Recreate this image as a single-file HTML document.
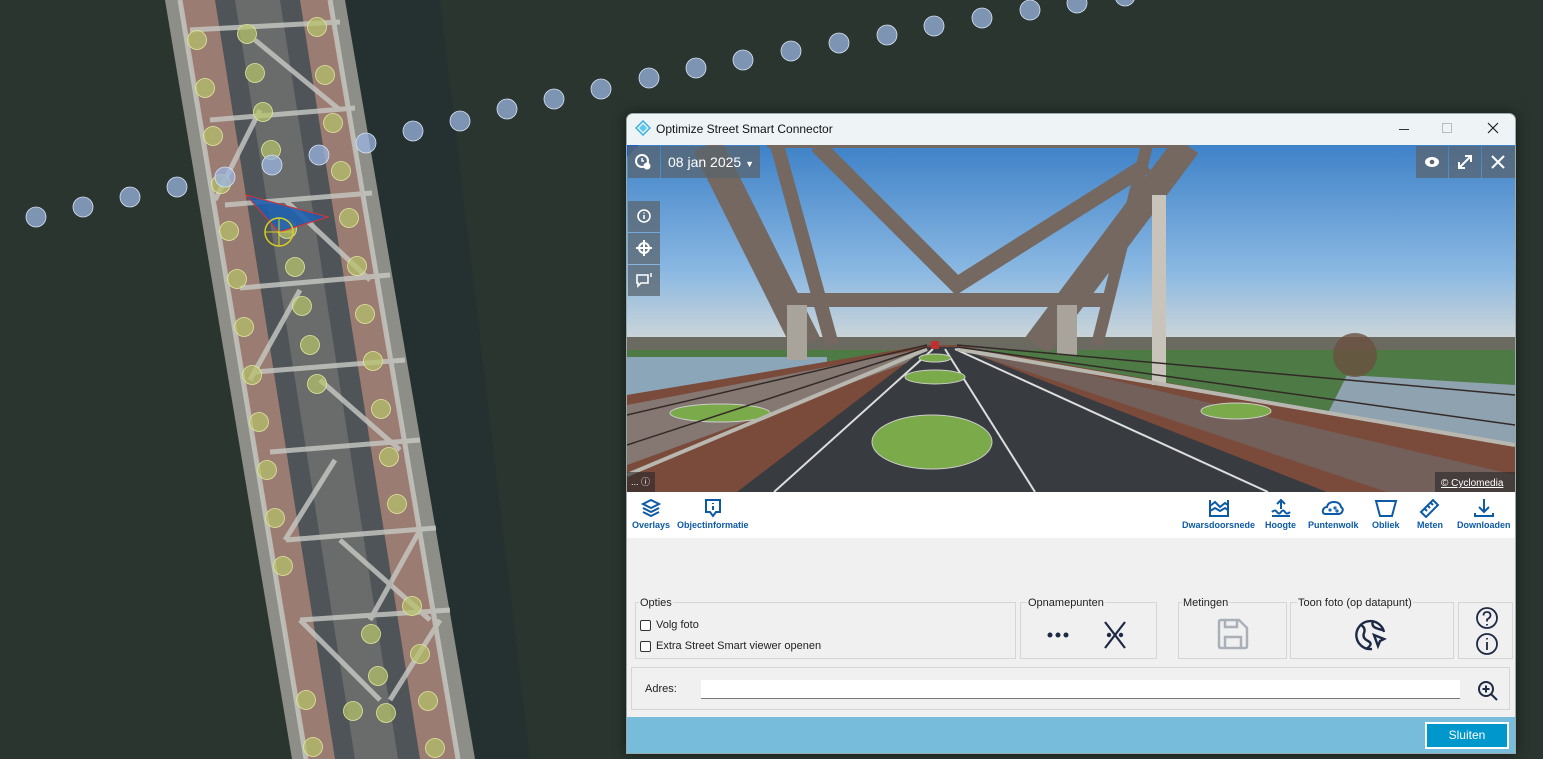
<!DOCTYPE html>
<html><head><meta charset="utf-8"><style>
*{margin:0;padding:0;box-sizing:border-box}
body{width:1543px;height:759px;overflow:hidden;background:#2a352f;font-family:"Liberation Sans",sans-serif;position:relative}
#map{position:absolute;left:0;top:0}
#dlg{position:absolute;left:626px;top:113px;width:890px;height:641px;background:#f0f0f0;border:1px solid #9aa;border-radius:7px 7px 0 0;overflow:hidden;box-shadow:0 0 12px rgba(0,0,0,.5)}
.title{position:absolute;left:0;top:0;width:100%;height:31px;background:#eef4f6;font-size:12px;color:#111}
.pano{position:absolute;left:0;top:31px;width:888px;height:347px}
.tb{position:absolute;left:0;top:378px;width:888px;height:46px;background:#fff}
.tool{position:absolute;top:6px;text-align:center;color:#0d5aa7;font-size:9px;font-weight:bold}
.tool svg{display:block;margin:0 auto 2px}
.grp{position:absolute;border:1px solid #d6d6d6;height:57px}
.lg{position:absolute;top:-6px;left:3px;background:#f0f0f0;font-size:11px;color:#222;padding:0 1px}
.cb{position:absolute;font-size:11px;color:#222;display:flex;align-items:center}
.cb i{display:inline-block;width:11px;height:11px;border:1px solid #333;border-radius:2px;background:#fff;margin-right:5px}
.ov{position:absolute;background:rgba(90,100,110,.75)}
</style></head><body>
<svg id="map" width="626" height="759" viewBox="0 0 626 759">
<rect width="626" height="759" fill="#2a352f"/>
<polygon points="345,0 440,0 530,759 470,759" fill="#243130"/>
<polygon points="165,0 345,0 475,759 292,759" fill="#8e8e88"/>
<polygon points="180,0 330,0 458,759 306,759" fill="#9a7c72"/>
<polygon points="215,0 300,0 420,759 335,759" fill="#4e5457"/>
<polygon points="235,0 280,0 398,759 355,759" fill="#6a6c6b"/>
<g stroke="#c8cac4" stroke-width="5" opacity=".8">
<line x1="180" y1="0" x2="306" y2="759"/><line x1="330" y1="0" x2="458" y2="759"/>
<line x1="190" y1="30" x2="340" y2="22"/><line x1="210" y1="120" x2="355" y2="108"/>
<line x1="225" y1="205" x2="372" y2="193"/><line x1="240" y1="288" x2="390" y2="275"/>
<line x1="255" y1="372" x2="405" y2="360"/><line x1="270" y1="452" x2="420" y2="440"/>
<line x1="286" y1="540" x2="436" y2="528"/><line x1="300" y1="620" x2="450" y2="610"/>
<line x1="255" y1="40" x2="340" y2="110"/><line x1="260" y1="110" x2="215" y2="200"/>
<line x1="285" y1="200" x2="370" y2="280"/><line x1="300" y1="290" x2="250" y2="380"/>
<line x1="320" y1="380" x2="400" y2="450"/><line x1="335" y1="460" x2="285" y2="540"/>
<line x1="340" y1="540" x2="430" y2="620"/><line x1="420" y1="530" x2="370" y2="620"/>
<line x1="300" y1="620" x2="380" y2="700"/><line x1="440" y1="620" x2="390" y2="700"/>
</g>
<g fill="#b7c36a" fill-opacity=".7" stroke="#e0e6a0" stroke-width=".8">
<circle cx="197" cy="40" r="9.5"/><circle cx="205" cy="88" r="9.5"/><circle cx="213" cy="136" r="9.5"/><circle cx="221" cy="184" r="9.5"/><circle cx="229" cy="231" r="9.5"/><circle cx="237" cy="279" r="9.5"/><circle cx="244" cy="327" r="9.5"/><circle cx="252" cy="375" r="9.5"/><circle cx="259" cy="422" r="9.5"/><circle cx="267" cy="470" r="9.5"/><circle cx="275" cy="518" r="9.5"/><circle cx="283" cy="566" r="9.5"/>
<circle cx="247" cy="34" r="9.5"/><circle cx="255" cy="73" r="9.5"/><circle cx="263" cy="112" r="9.5"/><circle cx="271" cy="150" r="9.5"/><circle cx="287" cy="229" r="9.5"/><circle cx="295" cy="267" r="9.5"/><circle cx="302" cy="306" r="9.5"/><circle cx="310" cy="345" r="9.5"/><circle cx="317" cy="384" r="9.5"/>
<circle cx="317" cy="27" r="9.5"/><circle cx="325" cy="75" r="9.5"/><circle cx="333" cy="123" r="9.5"/><circle cx="341" cy="171" r="9.5"/><circle cx="349" cy="218" r="9.5"/><circle cx="357" cy="266" r="9.5"/><circle cx="365" cy="314" r="9.5"/><circle cx="373" cy="361" r="9.5"/><circle cx="381" cy="409" r="9.5"/><circle cx="389" cy="457" r="9.5"/><circle cx="397" cy="504" r="9.5"/><circle cx="371" cy="634" r="9.5"/><circle cx="412" cy="606" r="9.5"/><circle cx="420" cy="654" r="9.5"/><circle cx="428" cy="701" r="9.5"/><circle cx="435" cy="748" r="9.5"/><circle cx="378" cy="676" r="9.5"/><circle cx="386" cy="713" r="9.5"/><circle cx="306" cy="700" r="9.5"/><circle cx="313" cy="747" r="9.5"/><circle cx="353" cy="711" r="9.5"/>
</g>
<g fill="#9bb4e0" fill-opacity=".75" stroke="#d6e2f4" stroke-width=".8">
<circle cx="36" cy="217" r="10"/><circle cx="83" cy="207" r="10"/><circle cx="130" cy="197" r="10"/><circle cx="177" cy="187" r="10"/><circle cx="225" cy="177" r="10"/><circle cx="272" cy="165" r="10"/><circle cx="319" cy="155" r="10"/><circle cx="366" cy="143" r="10"/><circle cx="413" cy="131" r="10"/><circle cx="460" cy="121" r="10"/><circle cx="507" cy="109" r="10"/><circle cx="554" cy="99" r="10"/><circle cx="601" cy="89" r="10"/>
</g>
<polygon points="246,195 328,217 279,232" fill="#1f5fae" fill-opacity=".9" stroke="#e03030" stroke-width="1"/>
<circle cx="279" cy="232" r="14" fill="none" stroke="#d8d020" stroke-width="1.5"/>
<line x1="265" y1="232" x2="293" y2="232" stroke="#d8d020"/><line x1="279" y1="218" x2="279" y2="246" stroke="#d8d020"/>
</svg>
<svg style="position:absolute;left:626px;top:0" width="917" height="113" viewBox="626 0 917 113">
<rect x="626" y="0" width="917" height="113" fill="#2a352f"/>
<g fill="#9bb4e0" fill-opacity=".75" stroke="#d6e2f4" stroke-width=".8">
<circle cx="649" cy="78" r="10"/><circle cx="696" cy="68" r="10"/><circle cx="743" cy="60" r="10"/><circle cx="791" cy="51" r="10"/><circle cx="839" cy="43" r="10"/><circle cx="887" cy="35" r="10"/><circle cx="934" cy="26" r="10"/><circle cx="982" cy="18" r="10"/><circle cx="1030" cy="10" r="10"/><circle cx="1077" cy="3" r="10"/><circle cx="1125" cy="-4" r="10"/>
</g></svg>
<svg style="position:absolute;left:1516px;top:113px" width="27" height="646"><rect width="27" height="646" fill="#2a352f"/></svg>

<div id="dlg">
<div class="title">
<svg style="position:absolute;left:8px;top:6px" width="16" height="16" viewBox="0 0 16 16"><polygon points="8,1 15,8 8,15 1,8" fill="none" stroke="#3ab0e0" stroke-width="1.5"/><polygon points="8,4 12,8 8,12 4,8" fill="#5ec8ee"/></svg>
<span style="position:absolute;left:29px;top:8px">Optimize Street Smart Connector</span>
<div style="position:absolute;left:772px;top:15px;width:10px;height:1px;background:#333"></div>
<div style="position:absolute;left:815px;top:9px;width:10px;height:10px;border:1px solid #bbb"></div>
<svg style="position:absolute;left:860px;top:8px" width="12" height="12"><path d="M1 1L11 11M11 1L1 11" stroke="#222" stroke-width="1.2"/></svg>
</div>
<svg class="pano" viewBox="0 0 888 347">
<defs><linearGradient id="sky" x1="0" y1="0" x2="0" y2="1"><stop offset="0" stop-color="#3f82c8"/><stop offset=".6" stop-color="#8ab8e2"/><stop offset="1" stop-color="#dcdcd6"/></linearGradient></defs>
<rect width="888" height="210" fill="url(#sky)"/>
<rect y="192" width="888" height="16" fill="#6a6a60"/>
<rect x="0" y="205" width="888" height="142" fill="#4d7a45"/>
<rect x="0" y="212" width="200" height="40" fill="#8aa6b8"/>
<polygon points="720,230 888,240 888,300 700,270" fill="#8fa2b0"/>
<polygon points="0,250 300,200 330,200 888,300 888,347 0,347" fill="#7a4a3a"/>
<polygon points="0,260 300,203 320,203 0,320" fill="#8a8c8c" opacity=".7"/>
<polygon points="330,203 350,203 888,330 888,347 760,347" fill="#6f7070" opacity=".6"/>
<polygon points="300,202 330,202 700,347 110,347" fill="#383b40"/>
<line x1="306" y1="204" x2="147" y2="347" stroke="#ddd" stroke-width="2"/>
<line x1="318" y1="204" x2="408" y2="347" stroke="#ddd" stroke-width="2"/>
<line x1="328" y1="204" x2="641" y2="347" stroke="#ddd" stroke-width="2"/>
<g fill="#7aaa4a" stroke="#ccc" stroke-width="1"><ellipse cx="305" cy="297" rx="60" ry="27"/><ellipse cx="308" cy="232" rx="30" ry="7"/><ellipse cx="308" cy="213" rx="16" ry="4"/><ellipse cx="609" cy="266" rx="35" ry="8"/><ellipse cx="93" cy="268" rx="50" ry="9"/></g>
<rect x="304" y="196" width="8" height="8" fill="#c03030"/>
<g stroke="#746860" fill="none" stroke-linecap="butt">
<path d="M80 0 L180 200" stroke-width="30"/>
<path d="M150 0 L205 200" stroke-width="14"/>
<path d="M560 0 L410 200" stroke-width="28"/>
<path d="M520 0 L470 200" stroke-width="12"/>
<path d="M190 0 L330 140 L520 20" stroke-width="16"/>
<path d="M170 155 L480 155" stroke-width="14"/>
<path d="M140 0 L560 0" stroke-width="6"/>
</g>
<rect x="160" y="160" width="20" height="55" fill="#a8a49c"/>
<rect x="430" y="160" width="20" height="50" fill="#a8a49c"/>
<rect x="525" y="50" width="14" height="190" fill="#c8c4bc"/>
<g stroke="#b8b8b0" stroke-width="4" fill="none"><path d="M0 330 L300 204"/><path d="M888 300 L330 204"/></g>
<g stroke="#332a28" stroke-width="1.5" fill="none"><path d="M0 270 L300 200"/><path d="M0 300 L300 202"/><path d="M888 250 L330 200"/><path d="M888 280 L330 202"/></g>
<circle cx="728" cy="210" r="22" fill="#6a5040" opacity=".8"/>
<rect x="808" y="327" width="80" height="20" fill="rgba(40,40,40,.6)"/>
<text x="814" y="341" font-size="10" fill="#fff" text-decoration="underline" font-family="Liberation Sans">© Cyclomedia</text>
<rect x="0" y="327" width="28" height="20" fill="rgba(40,40,40,.6)"/>
<text x="4" y="340" font-size="9" fill="#fff" font-family="Liberation Sans">... ⓘ</text>
</svg>
<div style="position:absolute;left:0;top:31px;width:0;height:0;border-top:12px solid #1a60c8;border-right:12px solid transparent"></div>
<div class="ov" style="left:1px;top:32px;width:32px;height:32px"><svg width="32" height="32"><circle cx="14" cy="15" r="6" fill="none" stroke="#fff" stroke-width="2"/><circle cx="19" cy="20" r="3.5" fill="#fff"/><path d="M14 12v3h2" stroke="#fff" fill="none" stroke-width="1.5"/></svg></div>
<div class="ov" style="left:34px;top:32px;width:99px;height:32px;color:#fff;font-size:14px;line-height:32px;padding-left:7px">08 jan 2025 <span style="font-size:9px">▼</span></div>
<div class="ov" style="left:1px;top:87px;width:32px;height:31px"><svg width="32" height="31"><circle cx="16" cy="15" r="6" fill="none" stroke="#fff" stroke-width="1.6"/><path d="M16 14v4M16 11.5v1" stroke="#fff" stroke-width="1.6"/></svg></div>
<div class="ov" style="left:1px;top:119px;width:32px;height:31px"><svg width="32" height="31"><circle cx="16" cy="15" r="5" fill="none" stroke="#fff" stroke-width="2"/><path d="M16 7v16M8 15h16" stroke="#fff" stroke-width="2"/></svg></div>
<div class="ov" style="left:1px;top:151px;width:32px;height:31px"><svg width="32" height="31"><path d="M9 10h11v8h-7l-3 3v-3h-1z" fill="none" stroke="#fff" stroke-width="1.6"/><path d="M23 8v4" stroke="#fff" stroke-width="1.5"/></svg></div>
<div class="ov" style="left:789px;top:32px;width:32px;height:32px"><svg width="32" height="32"><ellipse cx="16" cy="16" rx="7" ry="5" fill="#fff"/><circle cx="16" cy="16" r="2.3" fill="#5a646e"/></svg></div>
<div class="ov" style="left:822px;top:32px;width:32px;height:32px"><svg width="32" height="32"><path d="M10 22L22 10M16 10h6v6M10 16v6h6" stroke="#fff" stroke-width="2" fill="none"/></svg></div>
<div class="ov" style="left:855px;top:32px;width:33px;height:32px"><svg width="32" height="32"><path d="M10 10L22 22M22 10L10 22" stroke="#fff" stroke-width="2"/></svg></div>

<div class="tb">
<div class="tool" style="left:5px"><svg width="22" height="20" viewBox="0 0 22 20" fill="none" stroke="#0d5aa7" stroke-width="2"><path d="M11 2l8 4-8 4-8-4z"/><path d="M3 10l8 4 8-4M3 14l8 4 8-4"/></svg>Overlays</div>
<div class="tool" style="left:50px"><svg width="20" height="20" viewBox="0 0 20 20" fill="none" stroke="#0d5aa7" stroke-width="2"><path d="M3 2h14v12h-4l-3 4-3-4H3z"/><path d="M10 8v4M10 5v1"/></svg>Objectinformatie</div>
<div class="tool" style="left:555px"><svg width="24" height="20" viewBox="0 0 24 20" fill="none" stroke="#0d5aa7" stroke-width="2"><path d="M3 2v16h18V2M3 8l5-4 5 5 5-4 3 2M3 13l5-3 5 3 5-3 3 2"/></svg>Dwarsdoorsnede</div>
<div class="tool" style="left:638px"><svg width="22" height="20" viewBox="0 0 22 20" fill="none" stroke="#0d5aa7" stroke-width="2"><path d="M11 11V2M7 6l4-4 4 4M2 14q3-3 5 0t4 0 4 0 5 0M2 18h18"/></svg>Hoogte</div>
<div class="tool" style="left:681px"><svg width="24" height="20" viewBox="0 0 24 20" fill="none" stroke="#0d5aa7" stroke-width="2"><path d="M5 16q-4 0-3-4 1-3 4-3 1-5 7-5 6 0 7 5 3 2 1 5-1 2-4 2z"/><circle cx="9" cy="12" r=".6"/><circle cx="14" cy="10" r=".6"/><circle cx="16" cy="13" r=".6"/></svg>Puntenwolk</div>
<div class="tool" style="left:745px"><svg width="24" height="20" viewBox="0 0 24 20" fill="none" stroke="#0d5aa7" stroke-width="2"><path d="M2 3h20l-4 15H6z"/></svg>Obliek</div>
<div class="tool" style="left:790px"><svg width="24" height="20" viewBox="0 0 24 20" fill="none" stroke="#0d5aa7" stroke-width="2"><path d="M3 14L15 2l5 5L8 19z"/><path d="M7 11l2 2M10 8l2 2M13 5l2 2"/></svg>Meten</div>
<div class="tool" style="left:830px"><svg width="24" height="20" viewBox="0 0 24 20" fill="none" stroke="#0d5aa7" stroke-width="2"><path d="M12 1v13M7 9l5 5 5-5M3 15v3h18v-3"/></svg>Downloaden</div>
</div>

<div class="grp" style="left:8px;top:488px;width:381px"><span class="lg">Opties</span>
<div class="cb" style="left:4px;top:16px"><i></i>Volg foto</div>
<div class="cb" style="left:4px;top:37px"><i></i>Extra Street Smart viewer openen</div></div>
<div class="grp" style="left:393px;top:488px;width:137px"><span class="lg" style="left:6px">Opnamepunten</span>
<svg style="position:absolute;left:20px;top:16px" width="100" height="36"><circle cx="9" cy="16" r="2.5" fill="#1e2a45"/><circle cx="17" cy="16" r="2.5" fill="#1e2a45"/><circle cx="25" cy="16" r="2.5" fill="#1e2a45"/><path d="M64 3L84 29M84 3L64 29" stroke="#1e2a45" stroke-width="2.2"/><circle cx="68" cy="16" r="2.2" fill="#1e2a45"/><circle cx="80" cy="16" r="2.2" fill="#1e2a45"/></svg></div>
<div class="grp" style="left:551px;top:488px;width:109px"><span class="lg">Metingen</span>
<svg style="position:absolute;left:37px;top:14px" width="34" height="34" viewBox="0 0 34 34" fill="none" stroke="#a9b0b8" stroke-width="2.5"><path d="M3 5q0-2 2-2h18l8 8v18q0 2-2 2H5q-2 0-2-2z"/><path d="M9 3v7h12V3M9 31V20h16v11"/></svg></div>
<div class="grp" style="left:663px;top:488px;width:164px"><span class="lg" style="left:6px">Toon foto (op datapunt)</span>
<svg style="position:absolute;left:62px;top:14px" width="36" height="36" viewBox="0 0 36 36" fill="none" stroke="#1e2a45" stroke-width="2.4"><path d="M31 15A14 14 0 1 0 19 32"/><path d="M8 8q5 3 3 8t4 8-2 8M20 4q-2 5 3 7t8 2"/><path d="M21 18l10 4-4 2-2 5z" fill="none"/></svg></div>
<div class="grp" style="left:831px;top:488px;width:55px"><svg style="position:absolute;left:15px;top:3px" width="26" height="50" viewBox="0 0 26 50" fill="none" stroke="#1e2a45" stroke-width="1.8"><circle cx="13" cy="12" r="10"/><path d="M9.5 9.5q0-3.5 3.5-3.5t3.5 3.5q0 2-3.5 4v2M13 18v1.5"/><circle cx="13" cy="38" r="10"/><path d="M13 36v8M13 32v1.5"/></svg></div>
<div class="grp" style="left:4px;top:553px;width:879px;height:43px"><span style="position:absolute;left:13px;top:15px;font-size:11px;color:#222">Adres:</span>
<div style="position:absolute;left:69px;top:12px;width:759px;height:19px;background:#fff;border-bottom:1px solid #777"></div>
<svg style="position:absolute;left:845px;top:12px" width="22" height="22" viewBox="0 0 22 22" fill="none" stroke="#1e2a45" stroke-width="2"><circle cx="9" cy="9" r="7"/><path d="M14 14l6 6M9 5.5v7M5.5 9h7"/></svg></div>

<div style="position:absolute;left:0;top:603px;width:890px;height:38px;background:#78bcdc"></div>
<div style="position:absolute;left:798px;top:608px;width:84px;height:27px;background:#0098cc;border:2px solid #fff;color:#fff;font-size:12px;text-align:center;line-height:23px">Sluiten</div>
</div>
</body></html>
